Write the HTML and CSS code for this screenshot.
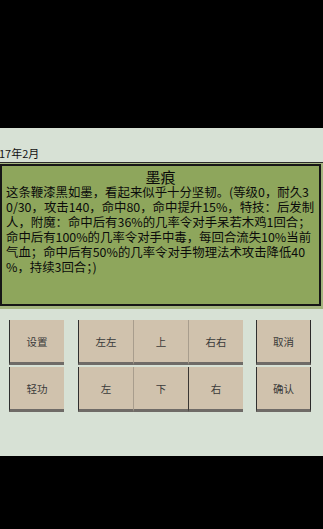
FILE: index.html
```html
<!DOCTYPE html>
<html>
<head>
<meta charset="utf-8">
<link rel="stylesheet" href="styles.css">
</head>
<body>
<div class="screen">
  <div class="date">17年2月</div>
  <div class="frame">
    <div class="panel">
      <div class="title">墨痕</div>
      <div class="desc">
        <div class="line">这条鞭漆黑如墨，看起来似乎十分坚韧。(等级0，耐久3</div>
        <div class="line">0/30，攻击140，命中80，命中提升15%，特技：后发制</div>
        <div class="line">人，附魔：命中后有36%的几率令对手呆若木鸡1回合；</div>
        <div class="line">命中后有100%的几率令对手中毒，每回合流失10%当前</div>
        <div class="line">气血；命中后有50%的几率令对手物理法术攻击降低40</div>
        <div class="line">%，持续3回合；)</div>
      </div>
    </div>
  </div>
  <div class="controls">
    <div class="col">
      <div class="btn">设置</div>
      <div class="btn">轻功</div>
    </div>
    <div class="pad">
      <div class="pad-row">
        <div class="btn cell">左左</div>
        <div class="btn cell">上</div>
        <div class="btn cell">右右</div>
      </div>
      <div class="pad-row">
        <div class="btn cell">左</div>
        <div class="btn cell">下</div>
        <div class="btn cell dark-left">右</div>
      </div>
    </div>
    <div class="col right">
      <div class="btn">取消</div>
      <div class="btn">确认</div>
    </div>
  </div>
</div>
</body>
</html>
```

FILE: styles.css
```css
* { box-sizing: border-box; }
html, body { margin: 0; padding: 0; background: #000; }
body { width: 323px; height: 529px; overflow: hidden; font-family: "Noto Sans CJK SC", "Noto Sans", sans-serif; }

.screen {
  margin-top: 128px;
  height: 328px;
  background: #d7e1d5;
  padding-top: 18px;
  overflow: hidden;
}

.date {
  font-size: 11px;
  line-height: 14px;
  height: 14px;
  color: #111;
  margin-left: -1px;
}

.frame {
  margin-top: 2px;
  background: #a4b57f;
  border-top: 1px solid #2d2d2d;
  padding: 1px 0 3px 0;
}

.panel {
  width: 321px;
  height: 142px;
  background: #8ea65c;
  border: 2px solid #161616;
  padding: 3px 0 0 4px;
  color: #0b0b0b;
}

.title {
  font-size: 15px;
  line-height: 16px;
  text-align: center;
  padding-right: 4px;
}

.desc {
  font-size: 12.4px;
  line-height: 15.1px;
}

.line { white-space: nowrap; }

.controls {
  margin-top: 11px;
  display: flex;
  padding-left: 9px;
}

.col { display: flex; flex-direction: column; gap: 2px; width: 55px; }
.col.right { margin-left: 13px; }
.col.right .btn { border-right: 1px solid #2a2a2a; }

.pad { margin-left: 14px; display: flex; flex-direction: column; gap: 2px; }
.pad-row { display: flex; }

.btn {
  height: 45px;
  width: 55px;
  background: #d0c2ad;
  border-left: 1px solid #2f2f2f;
  border-bottom: 3px solid #6f6b67;
  display: flex;
  align-items: center;
  justify-content: center;
  font-size: 10.5px;
  color: #3a3a3a;
}

.cell + .cell { border-left: 1px solid #a89d8d; }
.cell.dark-left { border-left: 1px solid #3a3633; }
```
